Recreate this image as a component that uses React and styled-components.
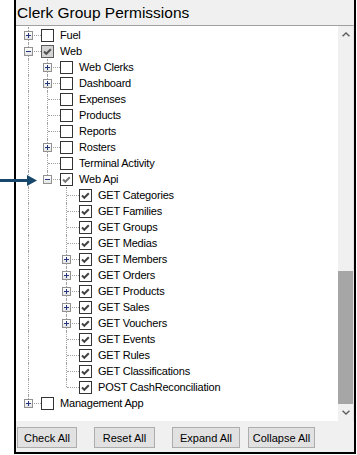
import React from "react";
import styled, { createGlobalStyle } from "styled-components";

const GlobalStyle = createGlobalStyle`
  html, body { margin: 0; padding: 0; background: #fff; }
  body { font-family: "Liberation Sans", Arial, sans-serif; }
`;

const Page = styled.div`
  position: relative;
  width: 357px;
  height: 455px;
  overflow: hidden;
`;

const Frame = styled.div`
  margin-left: 14px;
  width: 342px;
  height: 454px;
  box-sizing: border-box;
  border: 2px solid #000;
  border-top: none;
  background: #f0f0f0;
  display: flex;
  flex-direction: column;
`;

const Title = styled.div`
  flex: none;
  height: 25px;
  padding-left: 1px;
  font-size: 15.5px;
  line-height: 25px;
  color: #000;
`;

const TreePanel = styled.div`
  flex: none;
  height: 395px;
  display: flex;
  border-top: 1px solid #a0a0a0;
  border-right: 1px solid #e3e3e3;
  background: #fff;
`;

const TreeList = styled.div`
  flex: 1;
  overflow: hidden;
  padding-top: 1px;
`;

const Row = styled.div`
  display: flex;
  align-items: center;
  height: 16px;
  padding-left: 3px;
`;

const Guide = styled.div`
  flex: none;
  position: relative;
  width: 19px;
  height: 16px;
  &::before {
    content: "";
    display: ${(p) => (p.$through ? "block" : "none")};
    position: absolute;
    left: 9px;
    top: 0;
    height: 16px;
    border-left: 1px dotted #a0a0a0;
  }
`;

const Joint = styled.div`
  flex: none;
  position: relative;
  width: 19px;
  height: 16px;
  &::before {
    content: "";
    position: absolute;
    left: 9px;
    top: 0;
    height: ${(p) => (p.$last ? "8px" : "16px")};
    border-left: 1px dotted #a0a0a0;
  }
  &::after {
    content: "";
    position: absolute;
    left: 10px;
    top: 8px;
    width: 12px;
    border-top: 1px dotted #a0a0a0;
  }
`;

const Expander = styled.div`
  position: absolute;
  z-index: 1;
  left: 5px;
  top: 4px;
  width: 9px;
  height: 9px;
  box-sizing: border-box;
  border: 1px solid #919191;
  background: linear-gradient(#ffffff, #e4e4e4);
  &::before {
    content: "";
    position: absolute;
    left: 1px;
    top: 3px;
    width: 5px;
    height: 1px;
    background: #24367c;
  }
  &::after {
    content: "";
    display: ${(p) => (p.$open ? "none" : "block")};
    position: absolute;
    left: 3px;
    top: 1px;
    width: 1px;
    height: 5px;
    background: #24367c;
  }
`;

const Box = styled.div`
  flex: none;
  position: relative;
  width: 13px;
  height: 13px;
  margin-left: 3px;
  box-sizing: border-box;
  border: 1px solid ${(p) => (p.$state === "partial" ? "#5a5a5a" : "#333")};
  background: ${(p) => (p.$state === "partial" ? "#d4d4d4" : "#fff")};
  svg {
    position: absolute;
    left: 0;
    top: 0;
  }
`;

const Label = styled.span`
  margin-left: 6px;
  font-size: 11px;
  letter-spacing: -0.2px;
  line-height: 16px;
  color: #000;
  white-space: nowrap;
`;

const ScrollBar = styled.div`
  flex: none;
  width: 15px;
  display: flex;
  flex-direction: column;
  background: #f0f0f0;
`;

const ScrollButton = styled.div`
  flex: none;
  height: 17px;
  display: flex;
  align-items: center;
  justify-content: center;
`;

const Track = styled.div`
  flex: 1;
  display: flex;
  flex-direction: column;
  justify-content: flex-end;
`;

const Thumb = styled.div`
  height: 133px;
  background: #a6a6a6;
`;

const ButtonBar = styled.div`
  flex: 1;
  display: flex;
  align-items: flex-start;
  padding: 6px 0 0 1px;
`;

const Button = styled.button`
  width: ${(p) => p.$w}px;
  height: 21px;
  margin: 0 0 0 ${(p) => p.$ml || 0}px;
  padding: 0;
  box-sizing: border-box;
  border: 1px solid #adadad;
  background: #e1e1e1;
  font-family: "Liberation Sans", Arial, sans-serif;
  font-size: 11px;
  color: #000;
`;

const Pointer = styled.svg`
  position: absolute;
  left: 0;
  top: 175px;
`;

const tree = [
  { label: "Fuel", exp: "+" },
  {
    label: "Web",
    exp: "-",
    check: "partial",
    children: [
      { label: "Web Clerks", exp: "+" },
      { label: "Dashboard", exp: "+" },
      { label: "Expenses" },
      { label: "Products" },
      { label: "Reports" },
      { label: "Rosters", exp: "+" },
      { label: "Terminal Activity" },
      {
        label: "Web Api",
        exp: "-",
        check: "light",
        children: [
          { label: "GET Categories", check: "on" },
          { label: "GET Families", check: "on" },
          { label: "GET Groups", check: "on" },
          { label: "GET Medias", check: "on" },
          { label: "GET Members", exp: "+", check: "on" },
          { label: "GET Orders", exp: "+", check: "on" },
          { label: "GET Products", exp: "+", check: "on" },
          { label: "GET Sales", exp: "+", check: "on" },
          { label: "GET Vouchers", exp: "+", check: "on" },
          { label: "GET Events", check: "on" },
          { label: "GET Rules", check: "on" },
          { label: "GET Classifications", check: "on" },
          { label: "POST CashReconciliation", check: "on" },
        ],
      },
    ],
  },
  { label: "Management App", exp: "+" },
];

// the top level keeps going above "Fuel" (list is scrolled), so only depth decides "last"
function flatten(nodes, guides = []) {
  let rows = [];
  nodes.forEach((n, i) => {
    const last = i === nodes.length - 1;
    rows.push({ node: n, guides, last });
    if (n.children) rows = rows.concat(flatten(n.children, [...guides, !last]));
  });
  return rows;
}

const checkColor = { partial: "#505050", light: "#7a7a7a", on: "#444" };

const Check = ({ state }) =>
  state ? (
    <svg width="11" height="11" viewBox="0 0 11 11">
      <polyline points="2,5.5 4.3,7.8 8.8,3.2" fill="none" stroke={checkColor[state]} strokeWidth="2" />
    </svg>
  ) : null;

const Chevron = ({ down }) => (
  <svg width="8" height="5" viewBox="0 0 8 5">
    <polyline
      points={down ? "0.5,0.8 4,4 7.5,0.8" : "0.5,4.2 4,1 7.5,4.2"}
      fill="none"
      stroke="#606060"
      strokeWidth="1.5"
    />
  </svg>
);

export default function App() {
  const rows = flatten(tree);
  return (
    <Page>
      <GlobalStyle />
      <Frame>
        <Title>Clerk Group Permissions</Title>
        <TreePanel>
          <TreeList>
            {rows.map(({ node, guides, last }, i) => (
              <Row key={i}>
                {guides.map((g, j) => (
                  <Guide key={j} $through={g} />
                ))}
                <Joint $last={last}>
                  {node.exp && <Expander $open={node.exp === "-"} />}
                </Joint>
                <Box $state={node.check}>
                  <Check state={node.check} />
                </Box>
                <Label>{node.label}</Label>
              </Row>
            ))}
          </TreeList>
          <ScrollBar>
            <ScrollButton>
              <Chevron />
            </ScrollButton>
            <Track>
              <Thumb />
            </Track>
            <ScrollButton>
              <Chevron down />
            </ScrollButton>
          </ScrollBar>
        </TreePanel>
        <ButtonBar>
          <Button $w={60}>Check All</Button>
          <Button $w={61} $ml={17}>Reset All</Button>
          <Button $w={68} $ml={17}>Expand All</Button>
          <Button $w={67} $ml={8}>Collapse All</Button>
        </ButtonBar>
      </Frame>
      <Pointer width="38" height="12" viewBox="0 0 38 12">
        <rect x="0" y="4" width="29" height="3" fill="#17486b" />
        <polygon points="27,0 37,5.5 27,11" fill="#17486b" />
      </Pointer>
    </Page>
  );
}
